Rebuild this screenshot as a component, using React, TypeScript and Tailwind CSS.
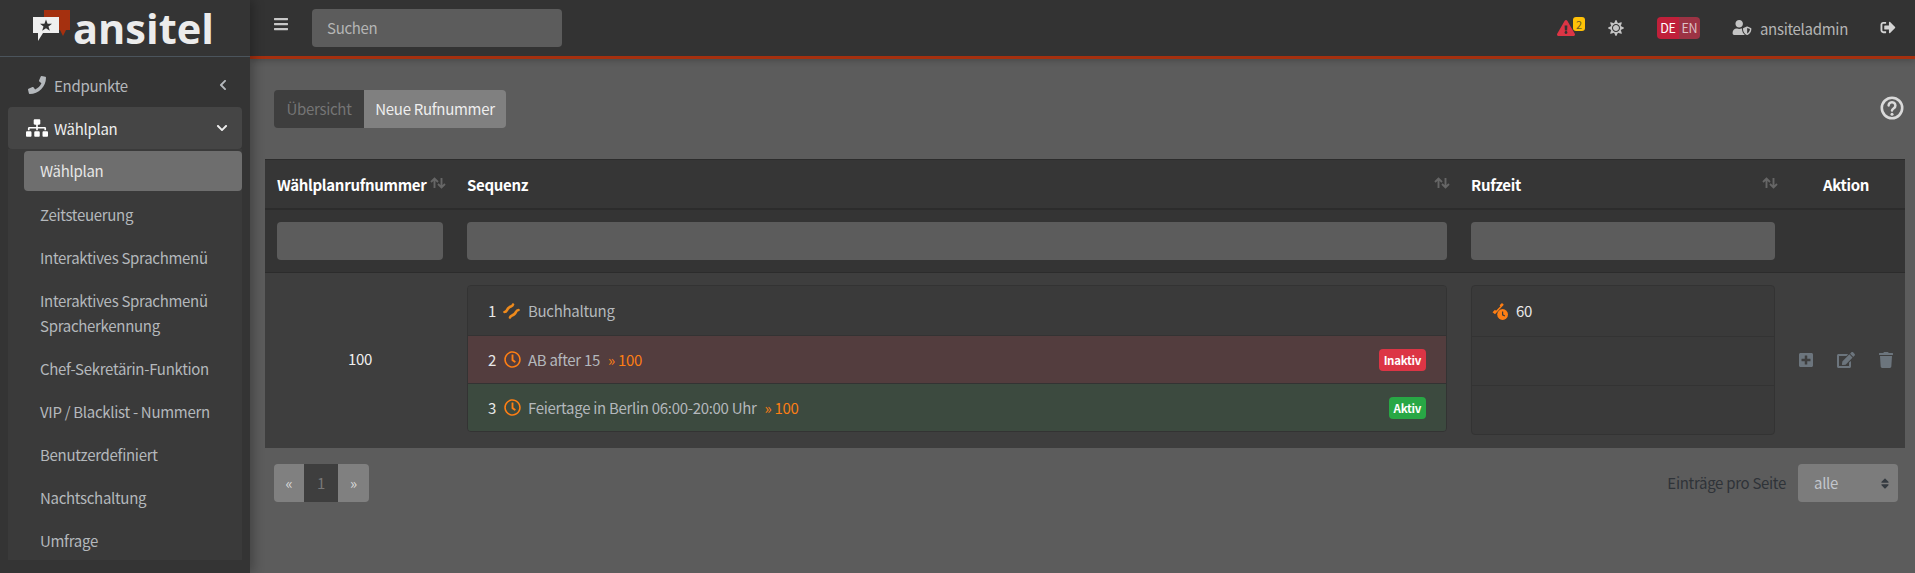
import {
  FaPhone,
  FaSitemap,
  FaChevronLeft,
  FaChevronDown,
  FaBars,
  FaExclamationTriangle,
  FaUserShield,
  FaSignOutAlt,
  FaRegClock,
  FaPlusSquare,
  FaEdit,
  FaTrash,
  FaSort,
  FaSun,
} from 'react-icons/fa';

const subItems = [
  'Zeitsteuerung',
  'Interaktives Sprachmenü',
  'Interaktives Sprachmenü Spracherkennung',
  'Chef-Sekretärin-Funktion',
  'VIP / Blacklist - Nummern',
  'Benutzerdefiniert',
  'Nachtschaltung',
  'Umfrage',
];

function Logo() {
  return (
    <div className="flex h-[57px] items-start border-b border-[#4b545c] pl-[32px]">
      <svg width="39" height="33" viewBox="0 0 39 33" className="mt-[9px] shrink-0">
        <path d="M12 1 H38 V21 H34 L31 27 L28 21 H12 Z" fill="#a5300f" />
        <path d="M1 8 H27 V24 H11 L6 32 V24 H1 Z" fill="#efefef" />
        <path
          d="M14 10.5 L15.6 14.8 L20 14.8 L16.5 17.5 L17.8 21.8 L14 19.2 L10.2 21.8 L11.5 17.5 L8 14.8 L12.4 14.8 Z"
          fill="#333333"
        />
      </svg>
      <span className='ml-[2px] font-["Open_Sans",sans-serif] text-[41.5px] leading-[57px] font-bold tracking-normal text-[#ececec]'>
        ansitel
      </span>
    </div>
  );
}

function Sidebar() {
  return (
    <aside className="z-10 flex w-[250px] shrink-0 flex-col bg-[#343434] shadow-[4px_0_10px_rgba(0,0,0,0.25)]">
      <Logo />
      <nav className="px-2 pt-[6px] leading-[25px]">
        <div className="flex h-[44px] items-center pr-[13px] pl-[20px] text-[#b4b8bc]">
          <FaPhone className="mr-[8px] h-[18px] w-[18px]" />
          <span>Endpunkte</span>
          <FaChevronLeft className="ml-auto h-[12px] w-[12px]" />
        </div>
        <div className="flex h-[42px] items-center rounded bg-[#454545] pr-[14px] pl-[18px] text-[#eeeeee]">
          <FaSitemap className="mr-[6px] h-[18px] w-[22px] text-white" />
          <span>Wählplan</span>
          <FaChevronDown className="ml-auto h-[12px] w-[12px]" />
        </div>
        <ul className="flex flex-col gap-[3px] bg-[#3a3a3a] pt-[2px] pl-4 text-[#b4b8bc]">
          <li className="flex h-[40px] items-center rounded bg-[#6e6e6e] px-4 pb-[1px] text-[#e6e6e6]">Wählplan</li>
          {subItems.map((item) => (
            <li key={item} className="px-4 py-[7.5px]">
              {item}
            </li>
          ))}
        </ul>
      </nav>
    </aside>
  );
}

function Topbar() {
  return (
    <header className="flex h-[59px] shrink-0 items-start border-b-[3px] border-[#a5300f] bg-[#333333] shadow-[0_2px_6px_rgba(0,0,0,0.2)]">
      <FaBars className="mt-[16px] ml-[24px] h-[16px] w-[14px] text-[#c8c8c8]" />
      <div className="mt-[9px] ml-[24px] flex h-[38px] w-[250px] items-center rounded bg-[#5c5c5c] pr-4 pl-[15px] text-[#b5b5b5]">
        Suchen
      </div>
      <div className="relative mt-[20px] ml-auto">
        <FaExclamationTriangle className="h-[16px] w-[18px] text-[#dc3545]" />
        <span className="absolute -top-[3px] left-[16px] flex h-[14px] w-[12px] items-center justify-center rounded-[3px] bg-[#ffc107] text-[11px] text-[#6b5a20]">
          2
        </span>
      </div>
      <FaSun className="mt-[20px] ml-[33px] h-[16px] w-[16px] text-[#c4c4c4]" />
      <div className="mt-[17px] ml-[33px] flex h-[22px] w-[43px] overflow-hidden rounded text-[12.5px] leading-[22px]">
        <span className="flex w-[22px] justify-center bg-[#c0203a] text-white">DE</span>
        <span className="flex w-[21px] justify-center bg-[#9c3344] text-[#dcc0c4]">EN</span>
      </div>
      <FaUserShield className="mt-[20px] ml-[32px] h-[15px] w-[20px] text-[#c4c4c4]" />
      <span className="mt-[16px] ml-[8px] leading-[25px] text-[#b5b5b5]">ansiteladmin</span>
      <FaSignOutAlt className="mt-[20px] mr-[19px] ml-[32px] h-[15px] w-[16px] text-[#d4d4d4]" />
    </header>
  );
}

function HelpIcon() {
  return (
    <svg width="24" height="24" viewBox="0 0 24 24" className="mt-[6px] ml-auto shrink-0 text-[#dadada]" fill="none" stroke="currentColor" strokeLinecap="round">
      <circle cx="12" cy="12" r="10.2" strokeWidth="2.6" />
      <path d="M8.6 9.4 a3.4 3.2 0 1 1 5.2 2.8 c-1.2 .8 -1.8 1.3 -1.8 2.4" strokeWidth="2.5" />
      <circle cx="12" cy="18.2" r="1.5" fill="currentColor" stroke="none" />
    </svg>
  );
}

function SortArrows({ className }: { className: string }) {
  return (
    <svg width="16" height="12" viewBox="0 0 16 12" className={className} fill="none" stroke="#666666" strokeWidth="1.9">
      <path d="M4.5 11 V2 M1 5 L4.5 1.5 L8 5 M11.5 1 V10 M8 7 L11.5 10.5 L15 7" />
    </svg>
  );
}

function HandsetIcon() {
  return (
    <svg width="18" height="16" viewBox="0 0 18 16" className="shrink-0" fill="none" stroke="#ee8a1c" strokeWidth="2.6" strokeLinecap="round">
      <path d="M1.5 9 C4 9 3.5 7 5.5 5 C7.5 3 9.5 4 10 1.5" />
      <path d="M7 14.5 C7.5 12 9.5 13 11.5 11 C13.5 9 13 7 15.5 7" />
    </svg>
  );
}

function RingTimeIcon() {
  return (
    <svg width="16" height="17" viewBox="0 0 16 17" className="shrink-0">
      <path d="M0.5 9.2 L3 6.8 L4 7.8 L8.4 3.2 L7.6 2.2 L10 0 L11.8 1.8 L3 11.2 Z" fill="#fd7e14" />
      <circle cx="10.6" cy="11.5" r="5.4" fill="#fd7e14" />
      <path d="M10.6 8.5 V11.8 L12.9 13" fill="none" stroke="#3a3a3a" strokeWidth="1.2" />
    </svg>
  );
}

function SequenceRow({
  num,
  name,
  target,
  badge,
  className,
}: {
  num: number;
  name: string;
  target?: string;
  badge?: string;
  className: string;
}) {
  return (
    <div className={`flex items-center pr-[20px] pl-[20px] ${className}`}>
      <span className="w-[8px] text-[#e8e8e8]">{num}</span>
      <span className="ml-[7px] flex w-[18px] justify-center">
        {target ? <FaRegClock className="h-[17px] w-[17px] text-[#fd7e14]" /> : <HandsetIcon />}
      </span>
      <span className="ml-[7px] text-[#b4b8bc]">{name}</span>
      {target && <span className="ml-[8px] text-[#fd7e14]">» {target}</span>}
      {badge && (
        <span
          className={`ml-auto flex h-[22px] items-center rounded-[4px] px-[5px] text-[11.5px] font-bold text-white ${
            badge === 'Aktiv' ? 'bg-[#28a745]' : 'bg-[#dc3545]'
          }`}
        >
          {badge}
        </span>
      )}
    </div>
  );
}

function PlanTable() {
  return (
    <div className="mt-[31px] mr-[10px] ml-[15px] leading-[24px]">
      {/* header */}
      <div className="grid h-[51px] grid-cols-[190px_1004px_328px_118px] items-center border-t border-b-2 border-[#2c2c2c] bg-[#363636] pt-[1px] font-bold text-white">
        <div className="relative pl-3">
          Wählplanrufnummer
          <SortArrows className="absolute top-[4px] right-[9px]" />
        </div>
        <div className="relative pl-3">
          Sequenz
          <SortArrows className="absolute top-[4px] right-[9px]" />
        </div>
        <div className="relative pl-3">
          Rufzeit
          <SortArrows className="absolute top-[4px] right-[9px]" />
        </div>
        <div className="text-center">Aktion</div>
      </div>
      {/* filter */}
      <div className="grid h-[63px] grid-cols-[190px_1004px_328px_118px] items-center border-b border-[#2c2c2c] bg-[#343434]">
        <div className="px-3">
          <div className="h-[38px] rounded bg-[#5c5c5c]" />
        </div>
        <div className="px-3">
          <div className="h-[38px] rounded bg-[#5c5c5c]" />
        </div>
        <div className="px-3">
          <div className="h-[38px] rounded bg-[#5c5c5c]" />
        </div>
        <div />
      </div>
      {/* body */}
      <div className="grid h-[175px] grid-cols-[190px_1004px_328px_118px] items-start bg-[#3e3e3e]">
        <div className="self-center pb-[4px] text-center text-[#f0f0f0]">100</div>
        <div className="px-3 pt-[12px]">
          <div className="grid h-[147px] grid-rows-[49px_48px_48px] overflow-hidden rounded border border-[#333333]">
            <SequenceRow num={1} name="Buchhaltung" className="bg-[#3a3a3a]" />
            <SequenceRow num={2} name="AB after 15" target="100" badge="Inaktiv" className="border-t border-[#333333] bg-[#533d3e]" />
            <SequenceRow num={3} name="Feiertage in Berlin 06:00-20:00 Uhr" target="100" badge="Aktiv" className="border-t border-[#333333] bg-[#3c4a3f]" />
          </div>
        </div>
        <div className="px-3 pt-[12px]">
          <div className="grid h-[150px] grid-rows-[50px_49px_48px] rounded border border-[#333333] bg-[#3a3a3a]">
            <div className="flex items-center gap-[8px] pl-[20px] text-[#e8e8e8]">
              <RingTimeIcon />
              60
            </div>
            <div className="border-t border-[#333333]" />
            <div className="border-t border-[#333333]" />
          </div>
        </div>
        <div className="flex items-center self-center pr-[12px] pb-[2px] pl-[12px] text-[#6c757d]">
          <FaPlusSquare className="h-[16px] w-[14px]" />
          <FaEdit className="ml-[24px] h-[16px] w-[18px]" />
          <FaTrash className="ml-[24px] h-[16px] w-[14px]" />
        </div>
      </div>
    </div>
  );
}

function Footer() {
  return (
    <div className="mt-[16px] mr-[17px] ml-[24px] flex items-center leading-[24px]">
      <div className="flex h-[38px] overflow-hidden rounded text-[#d8d8d8]">
        <span className="flex w-[30px] items-center justify-center bg-[#808080]">«</span>
        <span className="flex w-[34px] items-center justify-center bg-[#3e3e3e] text-[#777777]">1</span>
        <span className="flex w-[31px] items-center justify-center bg-[#808080]">»</span>
      </div>
      <span className="ml-auto text-[#2f3338]">Einträge pro Seite</span>
      <div className="ml-[12px] flex h-[38px] w-[100px] items-center rounded bg-[#7c7c7c] pr-[8px] pl-4 text-[#c2c6cc]">
        alle
        <FaSort className="ml-auto h-[13px] w-[10px] text-[#343a40]" />
      </div>
    </div>
  );
}

export default function App() {
  return (
    <div className='flex h-[573px] w-[1915px] overflow-hidden bg-[#5c5c5c] font-["Noto_Sans_CJK_JP","Noto_Sans",sans-serif] text-[15px] tracking-[-0.3px]'>
      <Sidebar />
      <main className="flex min-w-0 flex-1 flex-col">
        <Topbar />
        <div className="mt-[31px] flex items-start pr-[11px] pl-[24px]">
          <div className="flex h-[38px] overflow-hidden rounded">
            <span className="flex w-[90px] items-center justify-center bg-[#3e3e3e] text-[#757575]">Übersicht</span>
            <span className="flex w-[142px] items-center justify-center bg-[#808080] text-[#eeeeee]">Neue Rufnummer</span>
          </div>
          <HelpIcon />
        </div>
        <PlanTable />
        <Footer />
      </main>
    </div>
  );
}
